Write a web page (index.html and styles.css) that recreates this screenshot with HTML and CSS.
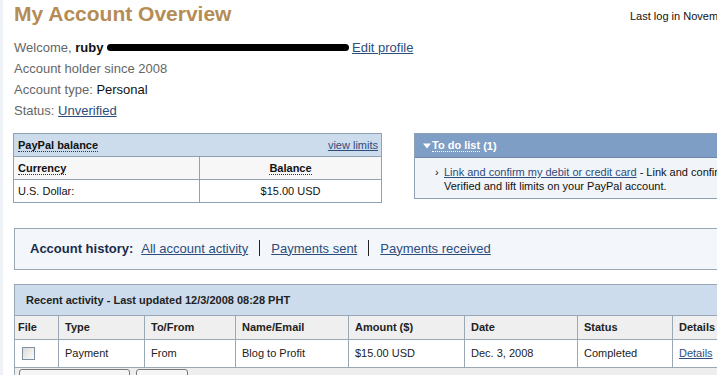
FILE: index.html
```html
<!DOCTYPE html>
<html lang="en">
<head>
  <meta charset="UTF-8" />
  <title>My Account Overview</title>
  <link rel="stylesheet" href="styles.css">
</head>
<body>
  <div class="page">
    <div class="top">
      <h1 class="title">My Account Overview</h1>
      <div class="last-log">Last log in November 28, 2008 10:14 PHT</div>
    </div>

    <div class="info">
      <div><span class="label">Welcome,</span> <b>ruby</b> <span class="redact"></span><a href="#" class="edit">Edit profile</a></div>
      <div><span class="label">Account holder since 2008</span></div>
      <div><span class="label">Account type:</span> Personal</div>
      <div><span class="label">Status:</span> <a href="#">Unverified</a></div>
    </div>

    <div class="boxes">
      <div class="balance">
        <div class="balance-head">
          <b class="dotted">PayPal balance</b>
          <a href="#">view limits</a>
        </div>
        <table class="balance-table">
          <tr>
            <th class="cur"><span class="dotted">Currency</span></th>
            <th class="amt"><span class="dotted">Balance</span></th>
          </tr>
          <tr>
            <td class="cur">U.S. Dollar:</td>
            <td class="amt">$15.00 USD</td>
          </tr>
        </table>
      </div>

      <div class="todo">
        <div class="todo-head">
          <svg class="arrow" width="8" height="6" viewBox="0 0 8 6"><path d="M0 0.5 H8 L4 5.5 Z" fill="#fff"/></svg>
          <span class="dotted">To do list</span>&nbsp;(1)
        </div>
        <div class="todo-body">
          <span class="bullet">&rsaquo;</span>
          <div><a href="#">Link and confirm my debit or credit card</a> - Link and confirm your card to get<br>Verified and lift limits on your PayPal account.</div>
        </div>
      </div>
    </div>

    <div class="history">
      <b class="history-label">Account history:</b>
      <a href="#">All account activity</a>
      <span class="sep"></span>
      <a href="#">Payments sent</a>
      <span class="sep"></span>
      <a href="#">Payments received</a>
    </div>

    <div class="recent">
      <div class="recent-head">Recent activity - Last updated 12/3/2008 08:28 PHT</div>
      <table class="activity">
        <tr>
          <th class="c-file">File</th>
          <th class="c-type">Type</th>
          <th class="c-to">To/From</th>
          <th class="c-name">Name/Email</th>
          <th class="c-amount">Amount ($)</th>
          <th class="c-date">Date</th>
          <th class="c-status">Status</th>
          <th>Details</th>
        </tr>
        <tr>
          <td class="c-file"><input type="checkbox" class="file-box"></td>
          <td>Payment</td>
          <td>From</td>
          <td>Blog to Profit</td>
          <td>$15.00 USD</td>
          <td>Dec. 3, 2008</td>
          <td>Completed</td>
          <td><a href="#">Details</a></td>
        </tr>
      </table>
      <div class="recent-foot">
        <button class="btn wide">Archive</button>
        <button class="btn">Hide</button>
      </div>
    </div>
  </div>
</body>
</html>
```

FILE: styles.css
```css
html, body {
  margin: 0;
  padding: 0;
  overflow: hidden;
  background: #fff;
  font-family: "Liberation Sans", Arial, sans-serif;
  color: #111;
}
body {
  box-shadow: inset 3px 0 #eef1f5;
}
a {
  color: #2d4d7c;
  text-decoration: underline;
}
.page {
  width: 1000px;
  padding: 2px 0 0 14px;
}
.top {
  display: flex;
}
.title {
  margin: 0;
  width: 616px;
  font-size: 21px;
  line-height: 24px;
  font-weight: bold;
  color: #b58c55;
}
.last-log {
  margin-top: 7px;
  font-size: 11px;
  line-height: 14px;
  white-space: nowrap;
}
.info {
  margin-top: 11px;
  font-size: 13px;
  line-height: 21px;
}
.label {
  color: #666;
}
.redact {
  display: inline-block;
  width: 242px;
  height: 7px;
  background: #000;
  border-radius: 4px;
  vertical-align: 1px;
}
.edit {
  margin-left: 3px;
}
.dotted {
  border-bottom: 1px dotted #333;
}
.boxes {
  display: flex;
  align-items: flex-start;
  gap: 32px;
  margin-top: 12px;
  font-size: 11px;
}
.balance {
  width: 369px;
  margin-left: -1px;
  box-sizing: border-box;
  border: 1px solid #8fa1b5;
}
.balance-head {
  display: flex;
  justify-content: space-between;
  align-items: center;
  height: 22px;
  padding: 0 3px 0 4px;
  background: #cddcec;
  border-bottom: 1px solid #8fa1b5;
}
.balance-table {
  width: 100%;
  border-spacing: 0;
  table-layout: fixed;
}
.balance-table th, .balance-table td {
  padding: 0 4px;
  line-height: 22px;
  text-align: left;
}
.balance-table th {
  background: #f7f7f7;
  border-bottom: 1px solid #8fa1b5;
}
.balance-table .cur {
  width: 185px;
  box-sizing: border-box;
}
.balance-table .amt {
  border-left: 1px solid #8fa1b5;
  text-align: center;
}
.todo {
  width: 340px;
  border: 1px solid #8fa1b5;
}
.todo-head {
  display: flex;
  align-items: center;
  height: 23px;
  padding-left: 8px;
  background: #7f9ec6;
  color: #fff;
  font-weight: bold;
  border-bottom: 1px solid #6d87a8;
}
.todo-head .dotted {
  border-bottom-color: #fff;
}
.arrow {
  margin-right: 1px;
}
.todo-body {
  display: flex;
  height: 40px;
  box-sizing: border-box;
  padding: 7px 0 0 20px;
  line-height: 14px;
  background: #f1f4f8;
  white-space: nowrap;
}
.bullet {
  width: 9px;
  flex: none;
}
.history {
  display: flex;
  align-items: center;
  width: 760px;
  height: 42px;
  box-sizing: border-box;
  margin-top: 25px;
  padding: 0 0 2px 15px;
  border: 1px solid #9aa7b4;
  background: #f3f7fb;
  font-size: 13px;
}
.history-label {
  color: #1b2c4a;
  margin-right: 8px;
}
.sep {
  width: 1px;
  height: 16px;
  margin: 0 11px;
  background: #222;
}
.recent {
  width: 760px;
  margin-top: 14px;
  border: 1px solid #9aa7b4;
  border-bottom: none;
  font-size: 11px;
}
.recent-head {
  height: 30px;
  line-height: 30px;
  padding-left: 11px;
  background: #cddcec;
  border-bottom: 1px solid #9aa7b4;
  font-weight: bold;
  color: #222;
}
.activity {
  width: 100%;
  border-spacing: 0;
  table-layout: fixed;
}
.activity th, .activity td {
  box-sizing: border-box;
  text-align: left;
  line-height: 15px;
  border-bottom: 1px solid #9aa7b4;
  border-left: 1px solid #9aa7b4;
  padding: 0 6px;
  white-space: nowrap;
}
.activity th {
  height: 24px;
  background: #efefef;
  color: #222;
}
.activity td {
  height: 28px;
  color: #222;
}
.activity .c-file {
  width: 43px;
  border-left: none;
  padding-left: 3px;
}
.activity td.c-file {
  padding-left: 7px;
}
.c-type { width: 86px; }
.c-to { width: 91px; }
.c-name { width: 113px; }
.c-amount { width: 116px; }
.c-date { width: 113px; }
.c-status { width: 95px; }
.file-box {
  appearance: none;
  display: block;
  width: 13px;
  height: 13px;
  margin: 0;
  border: 1px solid #7f8fa3;
  background: linear-gradient(135deg, #dcdcd6, #fbfbf9);
}
.recent-foot {
  display: flex;
  gap: 6px;
  padding: 1px 4px;
  background: #eee;
}
.btn {
  width: 52px;
  padding: 8px 8px 4px;
  line-height: 14px;
  font-family: inherit;
  font-size: 11px;
  border: 1px solid #7a7a7a;
  border-radius: 3px;
  background: #f5f5f5;
}
.btn.wide {
  width: 111px;
}
```
